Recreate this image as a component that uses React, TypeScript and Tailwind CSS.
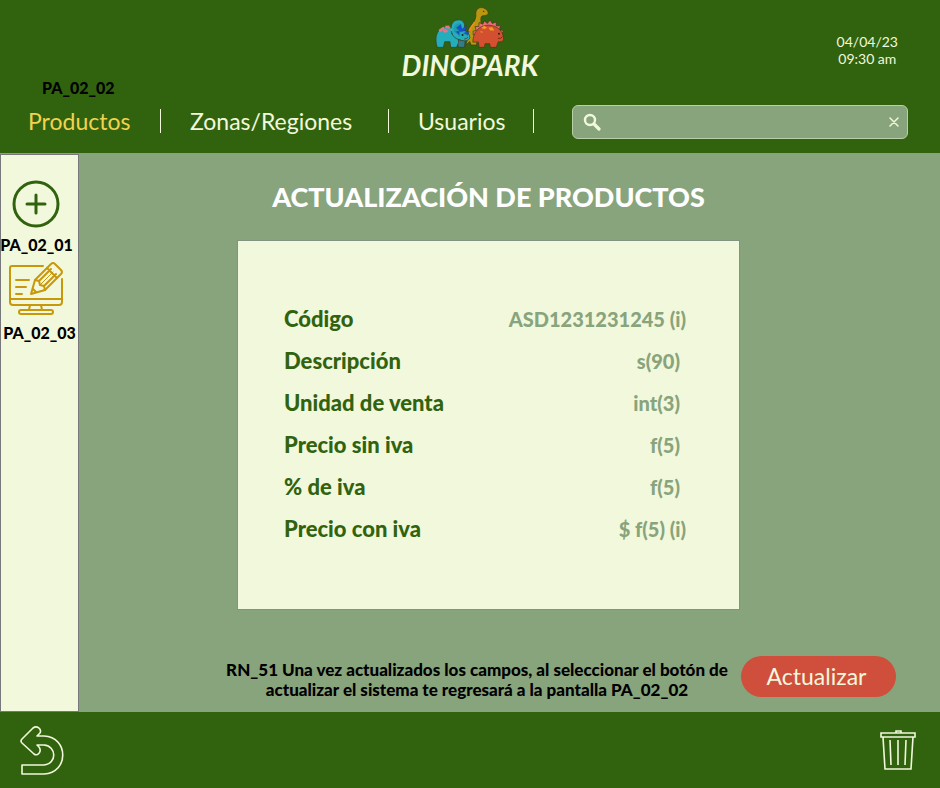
import React from "react";

type Field = { id: string; label: string; value: string; readOnly?: boolean };

const fields: Field[] = [
  { id: "codigo", label: "Código", value: "ASD1231231245 (i)", readOnly: true },
  { id: "descripcion", label: "Descripción", value: "s(90)" },
  { id: "unidad", label: "Unidad de venta", value: "int(3)" },
  { id: "precio-sin", label: "Precio sin iva", value: "f(5)" },
  { id: "iva", label: "% de iva", value: "f(5)" },
  { id: "precio-con", label: "Precio con iva", value: "$ f(5) (i)", readOnly: true },
];

function Dinos() {
  return (
    <svg viewBox="115 18 220 130" className="h-[43px] w-[73px]" aria-hidden="true" strokeLinejoin="round" strokeLinecap="round">
      <g stroke="#3a3a12" strokeWidth="2">
        <path d="M214 136 C222 118 214 104 224 84 C234 70 246 62 244 42 C244 26 256 20 268 24 C282 30 286 42 276 46 C268 48 262 46 260 52 C258 64 262 70 258 84 L252 100 L246 136 L230 136 L226 126 Z" fill="#b8960f" />
        <path d="M240 68 C234 76 230 82 226 92" fill="none" stroke="#f28a1c" strokeWidth="5" />
        <path d="M236 104 L236 94 L245 92 L242 80 L253 80 L254 68 L265 73 L270 63 L279 71 L287 60 L294 71 L306 66 L306 78 L319 78 L315 90 L328 92 L322 106 Z" fill="#ee6a78" />
        <path d="M235 126 C236 96 254 76 284 76 C310 78 326 94 328 114 C330 124 322 128 312 126 L306 143 L288 143 L286 132 L272 132 L270 143 L254 143 L252 128 Z" fill="#d2502f" />
        <path d="M188 120 L212 122 L210 143 L192 143 Z" fill="#347c8c" />
        <path d="M126 138 C118 106 130 86 152 80 C166 76 180 86 190 102 L192 128 L186 143 L168 143 L166 126 L150 126 L146 143 L128 143 Z" fill="#24aebb" />
        <path d="M172 102 C164 78 174 60 190 60 C208 58 214 74 208 92 C220 94 226 106 226 114 C224 124 208 126 196 120 C184 118 176 112 172 102 Z" fill="#24aebb" />
      </g>
      <path d="M178 98 C174 80 184 68 194 70 C204 72 204 84 198 94" fill="#1c9db2" />
      <path d="M186 84 L198 74 L202 88 L216 76 L214 92 L198 96 Z M208 100 L224 94 L220 106 Z M184 96 L194 94 L194 106 Z" fill="#174fd0" stroke="#1b3b86" strokeWidth="1" />
      <path d="M132 90 L146 80 L150 88 L134 98 Z M150 78 L164 77 L166 86 L156 86 Z M144 94 L152 87 L161 94 L152 100 Z M164 88 L172 86 L172 94 Z" fill="#ef6f83" />
      <path d="M260 84 L270 78 L278 84 L270 88 Z M282 84 L294 82 L300 92 L288 92 Z M256 96 L264 94 L264 100 Z" fill="#f29a22" />
      <g fill="#222">
        <circle cx="268" cy="34" r="2" />
        <circle cx="204" cy="106" r="3" />
        <circle cx="314" cy="102" r="3" />
      </g>
      <path d="M312 116 Q320 118 324 112 M210 118 Q216 118 220 113" fill="none" stroke="#3a2412" strokeWidth="2" />
    </svg>
  );
}

function Separator() {
  return <span className="h-6 w-px shrink-0 bg-[#f2f8dc]" />;
}

function EditIcon() {
  return (
    <svg viewBox="0 0 54 54" className="h-[54px] w-[54px]" fill="none" stroke="#c8980a" strokeWidth="2" strokeLinejoin="round" strokeLinecap="round" aria-hidden="true">
      <path d="M34 4 H3 Q1 4 1 6 V40 Q1 43 4 43 H50 Q53 43 53 40 V17" />
      <path d="M1 37 H53" />
      <path d="M21 43 L20 48 M32 43 L33 48" />
      <rect x="10" y="48" width="34" height="4" rx="2" />
      <path d="M7 18 H20 M7 25 H17 M7 32 H13" />
      <path d="M22 32 L26 18 L42 2 Q44 0 46 2 L52 8 Q54 10 52 12 L36 28 Z" />
      <path d="M26 18 L30 19 L31 23 L35 24 L36 28 M30 19 L42 7 M35 24 L47 12 M38 6 L48 16 M24 27 L27 30" />
      <path d="M31 23 L44 10" strokeWidth="1" />
    </svg>
  );
}

export default function App() {
  return (
    <div className="flex min-h-screen flex-col bg-[#88a47c] font-[Lato,sans-serif] text-[#f2f8dc]">
      <header className="bg-[#31630f] pb-[9px]">
        <div className="grid h-[100px] grid-cols-[1fr_auto_1fr] pt-[6px]">
          <p className="self-end pb-[2px] pl-[42px] text-base leading-5 font-black text-black">PA_02_02</p>
          <div className="flex flex-col items-center">
            <Dinos />
            <h2 className="text-[28px] leading-8 font-bold italic">DINOPARK</h2>
          </div>
          <time className="mt-[27px] mr-[42px] flex flex-col justify-self-end text-center text-sm leading-[17px]">
            <span>04/04/23</span>
            <span>09:30 am</span>
          </time>
        </div>
        <div className="flex h-11 items-center pr-8 pl-7">
          <nav className="flex items-center gap-[29px] pb-[2px] text-[23px] leading-8">
            <a href="#productos" className="w-[103px] text-[#f2d24f]">Productos</a>
            <Separator />
            <a href="#zonas" className="w-[169px]">Zonas/Regiones</a>
            <Separator />
            <a href="#usuarios" className="w-[86px]">Usuarios</a>
            <Separator />
          </nav>
          <div className="ml-[38px] flex h-[34px] flex-1 items-center rounded-md border border-[#b9cfa5] bg-[#88a47c] pr-2 pl-[10px]">
            <svg viewBox="0 0 18 18" className="h-[18px] w-[18px]" fill="none" stroke="#f2f8dc" aria-hidden="true">
              <circle cx="7" cy="7" r="5" strokeWidth="2.4" />
              <path d="M11 11 L16 16" strokeWidth="3.2" strokeLinecap="round" />
            </svg>
            <input type="text" aria-label="Buscar" className="min-w-0 flex-1 bg-transparent px-2 text-base outline-none" />
            <button type="button" aria-label="Borrar búsqueda">
              <svg viewBox="0 0 10 10" className="h-[10px] w-[10px]" stroke="#f2f8dc" strokeWidth="1.5" strokeLinecap="round" aria-hidden="true">
                <path d="M1 1 L9 9 M9 1 L1 9" />
              </svg>
            </button>
          </div>
        </div>
      </header>

      <div className="flex flex-1 pt-px">
        <aside className="flex w-[79px] shrink-0 flex-col items-center border border-[#77777c] bg-[#f2f8dc] pt-[25px] text-base leading-5 font-black text-black">
          <button type="button" aria-label="Agregar" className="mr-[7px]">
            <svg viewBox="0 0 48 48" className="h-12 w-12" fill="none" stroke="#31630f" strokeLinecap="round" aria-hidden="true">
              <circle cx="24" cy="24" r="22" strokeWidth="3" />
              <path d="M24 15 V33 M15 24 H33" strokeWidth="3" />
            </svg>
          </button>
          <p className="mt-[7px] mr-[6px]">PA_02_01</p>
          <button type="button" aria-label="Editar" className="mt-[7px] mr-[7px]">
            <EditIcon />
          </button>
          <p className="mt-[7px]">PA_02_03</p>
        </aside>

        <main className="flex flex-1 flex-col items-center pt-[25px] pr-[42px] pb-3">
          <h1 className="text-[27px] leading-9 font-black text-white">ACTUALIZACIÓN DE PRODUCTOS</h1>
          <form id="producto" className="mt-[25px] flex h-[370px] w-[503px] flex-col justify-center border border-[#839381] bg-[#f2f8dc] pr-[53px] pb-[3px] pl-[46px] font-black">
            {fields.map((f) => (
              <div key={f.id} className="flex h-[42px] items-center">
                <label htmlFor={f.id} className="shrink-0 text-[22px] text-[#31630f]">{f.label}</label>
                <input
                  id={f.id}
                  type="text"
                  defaultValue={f.value}
                  readOnly={f.readOnly}
                  className={`min-w-0 flex-1 bg-transparent text-right text-xl text-[#88a47c] outline-none ${f.readOnly ? "" : "pr-[6px]"}`}
                />
              </div>
            ))}
          </form>
          <div className="mt-auto flex items-start gap-3 self-end pr-[2px]">
            <p className="w-[504px] pt-1 text-center text-[17px] leading-5 font-black text-black">
              RN_51 Una vez actualizados los campos, al seleccionar el botón de actualizar el sistema te regresará a la pantalla PA_02_02
            </p>
            <button type="submit" form="producto" className="h-[41px] w-[155px] rounded-full bg-[#d04f3c] pr-1 text-[23px]">
              Actualizar
            </button>
          </div>
        </main>
      </div>

      <footer className="flex h-[76px] items-center justify-between bg-[#31630f] pr-6 pl-5">
        <button type="button" aria-label="Regresar">
          <svg viewBox="0 0 44 50" className="h-[50px] w-11" fill="none" stroke="#f2f8dc" strokeWidth="1.6" strokeLinejoin="round" aria-hidden="true">
            <path d="M2 14 L13 3 C17 0 22 4 20 8 L17 11 H24 C49 12 49 48 24 49 H2 V40 H24 C37 39 37 21 24 20 H17 L19 22 C22 26 18 32 14 29 L2 18 Q0 16 2 14 Z" />
          </svg>
        </button>
        <button type="button" aria-label="Eliminar">
          <svg viewBox="0 0 36 42" className="h-[42px] w-9" fill="none" stroke="#f2f8dc" strokeWidth="1.6" aria-hidden="true">
            <path d="M1 4 H35 V8 H1 Z M16 4 V2 H21 V4 M3 8 L5 40 H31 L33 8 M10 11 L11 36 M18 11 V36 M26 11 L25 36" />
          </svg>
        </button>
      </footer>
    </div>
  );
}
